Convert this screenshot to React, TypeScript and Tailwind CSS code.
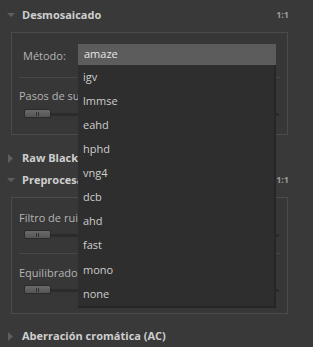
import React from "react";

const Slider = () => (
  <div className="relative h-[10px] w-full">
    <div className="absolute left-[4px] right-0 top-[4px] h-[3px] bg-[#2b2b2b]" />
    <div className="absolute left-[4px] top-0 h-[9px] w-[27px] rounded-[2px] border border-[#2a2a2a] bg-gradient-to-b from-[#6a6a6a] to-[#555555] flex items-center justify-center">
      <div className="flex gap-[1px]">
        <div className="h-[4px] w-[1px] bg-[#333]" />
        <div className="h-[4px] w-[1px] bg-[#333]" />
      </div>
    </div>
  </div>
);

const Down = () => (
  <svg width="8" height="6" viewBox="0 0 8 6" className="ml-[7px] shrink-0">
    <polygon points="0,1 8,1 4,5" fill="#5e5e5e" />
  </svg>
);
const Right = () => (
  <svg width="6" height="9" viewBox="0 0 6 9" className="ml-[8px] shrink-0">
    <polygon points="0,0 5,4.5 0,9" fill="#5e5e5e" />
  </svg>
);

const Header = ({ title, open, oneone, clip }: { title: string; open?: boolean; oneone?: boolean; clip?: boolean }) => (
  <div className="flex h-[22px] items-center">
    {open ? <Down /> : <Right />}
    <span
      className={
        (open ? "ml-[7px]" : "ml-[8px]") +
        " text-[11px] font-bold text-[#cfcfcf] whitespace-nowrap" +
        (clip ? " block w-[56px] overflow-hidden" : "")
      }
    >
      {title}
    </span>
    {oneone && <span className="ml-auto mr-[24px] text-[9px] font-bold text-[#9a9a9a]">1:1</span>}
  </div>
);

export default function App() {
  const items = ["igv", "lmmse", "eahd", "hphd", "vng4", "dcb", "ahd", "fast", "mono", "none"];
  return (
    <div
      className="relative w-[313px] h-[347px] overflow-hidden bg-[#393939] text-[#b5b5b5]"
      style={{ fontFamily: '"Open Sans", sans-serif' }}
    >
      <div className="pt-[4px]">
        <Header title="Desmosaicado" open oneone />
      </div>
      <div className="ml-[11px] mr-[25px] mt-[6px] h-[103px] border border-[#4b4b4b] bg-[#373737] flex flex-col">
        <div className="flex h-[45px] items-center border-b border-[#474747] mx-[7px] pt-[3px]">
          <span className="ml-[4px] text-[11px]">Método:</span>
        </div>
        <div className="ml-[7px] mt-[11px] w-[59px] overflow-hidden text-[11px] leading-[14px] whitespace-nowrap">Pasos de subpíxel</div>
        <div className="pl-[8px] pr-[8px] pt-[6px]"><Slider /></div>
      </div>
      <div className="mt-[12px]">
        <Header title="Raw Black" clip />
      </div>
      <Header title="Preprocesado" open oneone clip />
      <div className="ml-[11px] mr-[25px] mt-[6px] h-[117px] border border-[#4b4b4b] bg-[#373737] flex flex-col">
        <div className="ml-[7px] mt-[13px] w-[59px] overflow-hidden text-[11px] leading-[14px] whitespace-nowrap">Filtro de ruido</div>
        <div className="pl-[8px] pr-[8px] pt-[5px]"><Slider /></div>
        <div className="mx-[7px] mt-[13px] border-b border-[#474747]" />
        <div className="ml-[7px] mt-[12px] w-[59px] overflow-hidden text-[11px] leading-[14px] whitespace-nowrap">Equilibrado</div>
        <div className="pl-[8px] pr-[8px] pt-[5px]"><Slider /></div>
      </div>
      <div className="mt-[11px]">
        <Header title="Aberración cromática (AC)" />
      </div>

      <div className="absolute left-[78px] top-[44px] w-[198px]">
        <div className="flex h-[21px] items-center bg-[#5c5c5c] pl-[6px] text-[11px] text-[#e6e6e6]">amaze</div>
        <div className="flex flex-col border-r-2 border-b-2 border-[#262626] bg-[#2e2e2e]">
          {items.map((it) => (
            <div key={it} className="flex h-[24.1px] items-center pl-[5px] text-[11px] text-[#cdcdcd]">
              {it}
            </div>
          ))}
        </div>
      </div>
    </div>
  );
}
